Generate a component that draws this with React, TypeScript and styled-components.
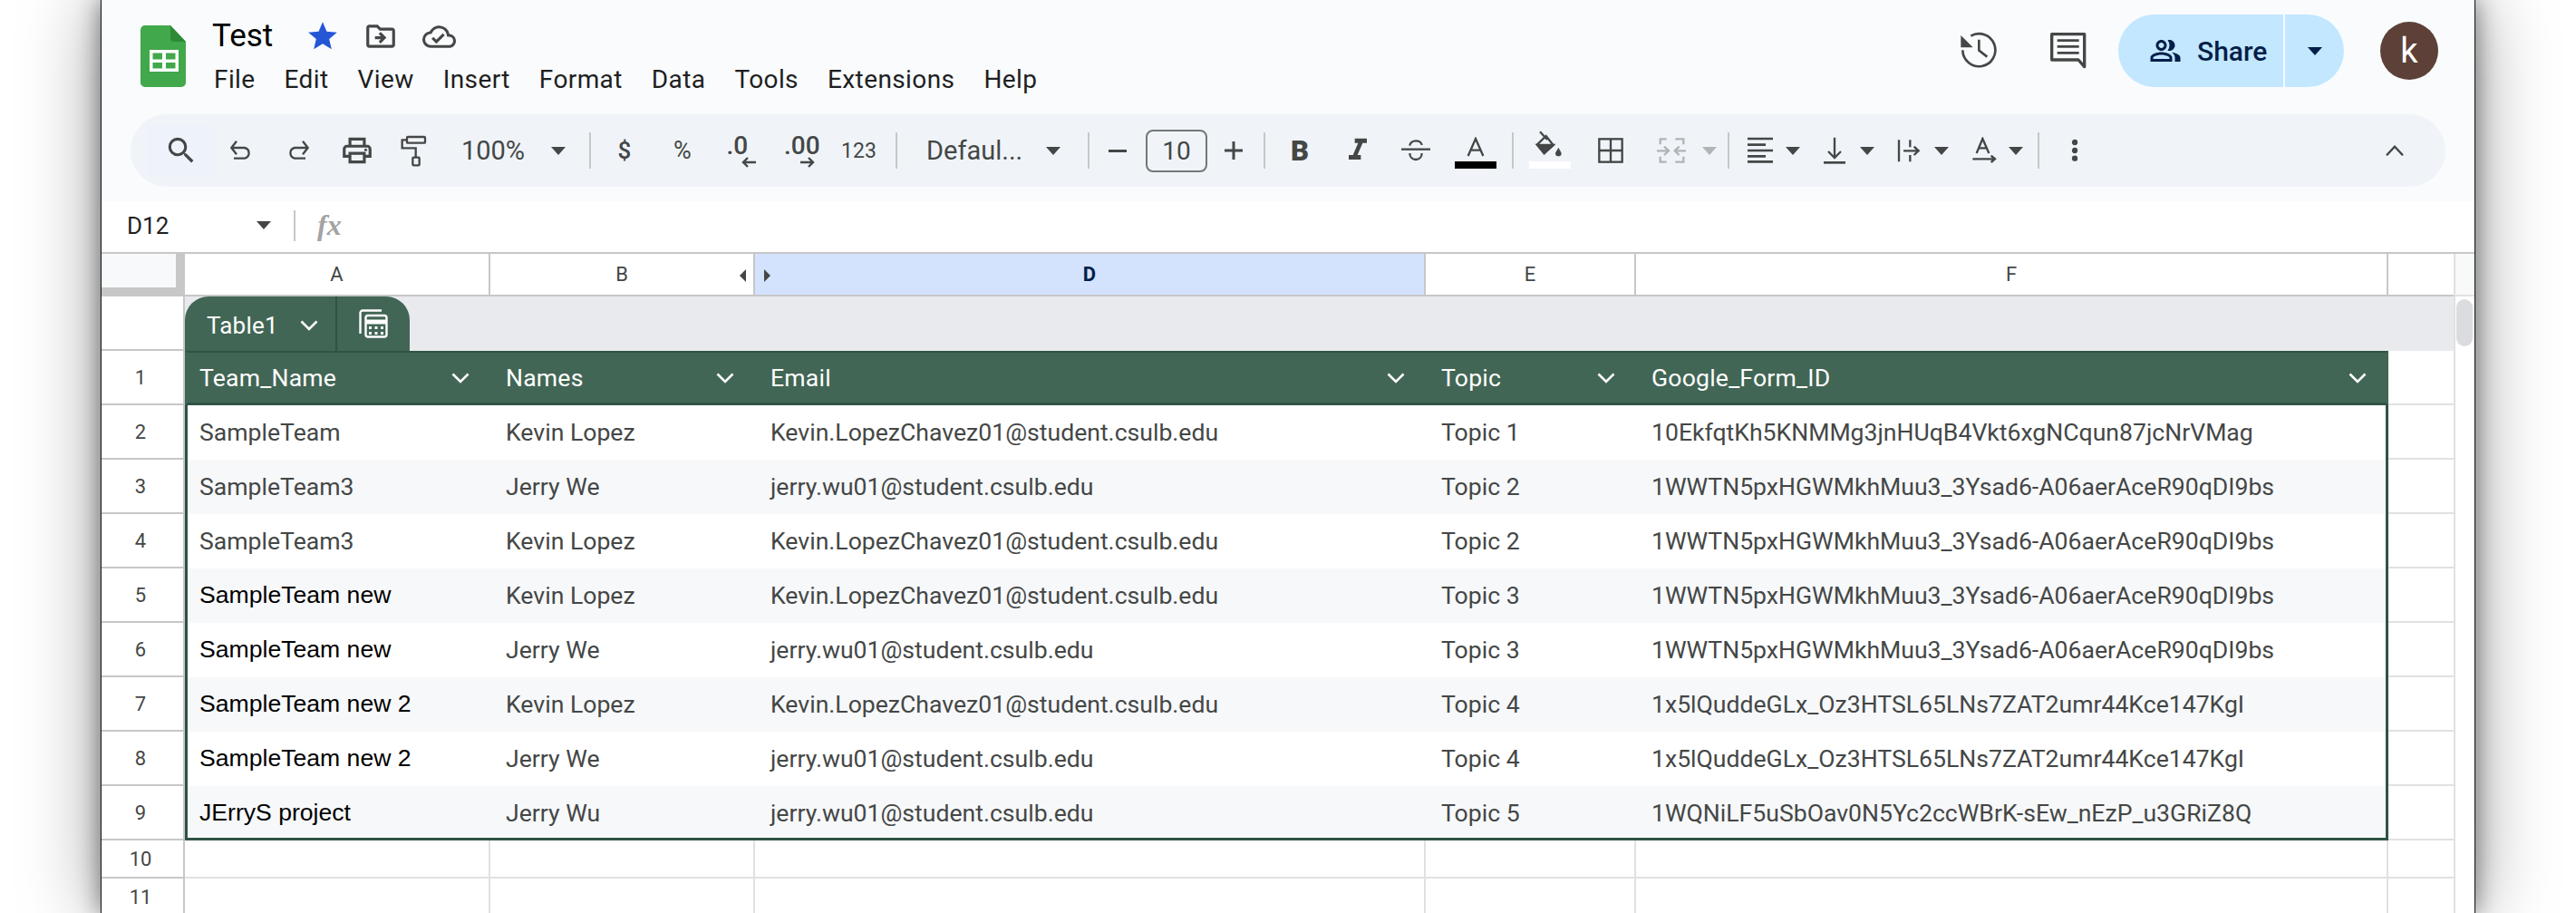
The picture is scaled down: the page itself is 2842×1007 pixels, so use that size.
import React from 'react';
import styled, { createGlobalStyle } from 'styled-components';
import {
  MdOutlinePrint,
  MdFormatItalic,
  MdStar,
  MdOutlineDriveFileMove,
  MdOutlineCloudDone,
  MdOutlinePeopleAlt,
  MdSearch,
} from 'react-icons/md';

const INK = '#444746';
const GREEN = '#426655';
const GREEN_DARK = '#2f5344';

const GlobalStyle = createGlobalStyle`
  html, body {
    margin: 0;
    height: 100%;
    background: #fff;
    overflow: hidden;
    font-family: Roboto, "Liberation Sans", sans-serif;
  }
`;

const Page = styled.div`
  width: 2842px;
  height: 1007px;
  padding-left: 111px;
  box-sizing: border-box;
  overflow: hidden;
`;

const Window = styled.div`
  width: 2620px;
  height: 1007px;
  box-sizing: border-box;
  border-left: 1px solid #111;
  border-right: 1px solid #111;
  background: #fff;
  box-shadow: 0 0 24px rgba(0, 0, 0, 0.45), 0 0 80px rgba(0, 0, 0, 0.4);
  display: flex;
  flex-direction: column;
  overflow: hidden;
`;

const Chrome = styled.div`
  height: 222px;
  flex: none;
  background: #f9fbfd;
`;

const TitleBar = styled.div`
  height: 126px;
  display: flex;
  padding: 0 40px 0 43px;
  box-sizing: border-box;
`;

const Logo = styled.svg`
  width: 50px;
  height: 68px;
  margin-top: 28px;
  flex: none;
`;

const TitleBlock = styled.div`
  margin-left: 29px;
  display: flex;
  flex-direction: column;
`;

const TitleRow = styled.div`
  height: 48px;
  margin-top: 16px;
  display: flex;
  align-items: center;
`;

const DocName = styled.div`
  font-size: 35px;
  color: #000;
  width: 103px;
  line-height: 48px;
`;

const TitleIcon = styled.div<{ $w: number }>`
  width: ${p => p.$w}px;
  display: flex;
  justify-content: center;
  color: ${INK};
`;

const MenuRow = styled.div`
  display: flex;
  gap: 32px;
  margin: 3px 0 0 2px;
  height: 40px;
  align-items: center;
`;

const MenuItem = styled.div`
  font-size: 28px;
  color: #1f1f1f;
  letter-spacing: 0.4px;
`;

const RightGroup = styled.div`
  margin-left: auto;
  height: 112px;
  display: flex;
  align-items: center;
`;

const ActionIcon = styled.div<{ $mr: number }>`
  width: 46px;
  display: flex;
  justify-content: center;
  margin-right: ${p => p.$mr}px;
`;

const ShareButton = styled.div`
  height: 80px;
  width: 249px;
  border-radius: 40px;
  background: #c2e7ff;
  display: flex;
  color: #041e49;
`;

const ShareMain = styled.div`
  width: 182px;
  display: flex;
  align-items: center;
  gap: 17px;
  padding-left: 34px;
  box-sizing: border-box;
  font-size: 30px;
  font-weight: 500;
`;

const ShareDrop = styled.div`
  flex: 1;
  border-left: 2px solid #f4faff;
  display: flex;
  align-items: center;
  justify-content: center;
`;

const Avatar = styled.div`
  width: 64px;
  height: 64px;
  margin-left: 40px;
  border-radius: 50%;
  background: #5d4037;
  color: #fff;
  font-size: 38px;
  display: flex;
  align-items: center;
  justify-content: center;
`;

const Toolbar = styled.div`
  margin: 0 32px 0 32px;
  height: 80px;
  border-radius: 40px;
  background: #f0f4f9;
  display: flex;
  align-items: center;
  padding: 0 46px 0 18px;
  box-sizing: border-box;
  color: ${INK};
`;

const SearchBox = styled.div`
  width: 75px;
  height: 56px;
  background: #eef3fb;
  display: flex;
  align-items: center;
  justify-content: center;
  flex: none;
`;

const Slot = styled.div<{ $w: number; $ml?: number }>`
  width: ${p => p.$w}px;
  margin-left: ${p => p.$ml ?? 0}px;
  flex: none;
  display: flex;
  align-items: center;
  justify-content: center;
`;

const PushedSlot = styled(Slot)`
  margin-left: auto;
`;

const ToolText = styled.span<{ $size?: number; $weight?: number }>`
  font-size: ${p => p.$size ?? 29}px;
  font-weight: ${p => p.$weight ?? 400};
  color: ${INK};
  white-space: nowrap;
`;

const FontName = styled(Slot)`
  justify-content: flex-start;
  padding-left: 11px;
  box-sizing: border-box;
`;

const Separator = styled.div`
  width: 2px;
  height: 40px;
  background: #c7c7c7;
`;

const SizeBox = styled.div`
  width: 68px;
  height: 47px;
  box-sizing: border-box;
  border: 2px solid #747775;
  border-radius: 8px;
  display: flex;
  align-items: center;
  justify-content: center;
  font-size: 28px;
  color: ${INK};
`;

const DecimalStack = styled.div<{ $w: number }>`
  width: ${p => p.$w}px;
  display: flex;
  flex-direction: column;
  align-items: flex-end;
  font-size: 28px;
  font-weight: 500;
  line-height: 25px;
  color: ${INK};
`;

const DecimalDigits = styled.span`
  align-self: flex-start;
`;

const ColorStack = styled.div`
  height: 40px;
  width: 46px;
  display: flex;
  flex-direction: column;
  align-items: center;
  justify-content: flex-end;
  gap: 5px;
`;

const Swatch = styled.div<{ $color: string }>`
  width: 46px;
  height: 8px;
  flex: none;
  background: ${p => p.$color};
`;

const FormulaBar = styled.div`
  height: 56px;
  flex: none;
  display: flex;
  align-items: center;
  background: #fff;
  padding: 0 0 3px 28px;
  box-sizing: border-box;
`;

const NameBox = styled.div`
  width: 143px;
  font-size: 26px;
  color: #1f1f1f;
`;

const FormulaDivider = styled.div`
  width: 2px;
  height: 34px;
  background: #c7c7c7;
  margin-left: 25px;
`;

const FxLabel = styled.div`
  margin-left: 24px;
  font-family: "Liberation Serif", serif;
  font-style: italic;
  font-weight: 700;
  font-size: 32px;
  color: #a3a3a3;
`;

const ColumnHeaders = styled.div`
  height: 49px;
  flex: none;
  display: flex;
  box-sizing: border-box;
  border-top: 2px solid #c7c7c7;
`;

const Corner = styled.div`
  width: 92px;
  box-sizing: border-box;
  background: #f8f9fa;
  border-right: 10px solid #c7c7c7;
  border-bottom: 10px solid #c7c7c7;
`;

const ColHead = styled.div<{ $w: number; $active?: boolean }>`
  width: ${p => p.$w}px;
  box-sizing: border-box;
  position: relative;
  border-right: 2px solid #c7c7c7;
  border-bottom: 2px solid #c7c7c7;
  background: ${p => (p.$active ? '#d3e3fd' : '#fff')};
  color: ${p => (p.$active ? '#041e49' : INK)};
  font-weight: ${p => (p.$active ? 700 : 400)};
  font-size: 22px;
  display: flex;
  align-items: center;
  justify-content: center;
`;

const HiddenMark = styled.div<{ $side: 'left' | 'right' }>`
  position: absolute;
  top: 17px;
  ${p => (p.$side === 'left' ? 'right: 8px;' : 'left: 10px;')}
  width: 0;
  height: 0;
  border-top: 7px solid transparent;
  border-bottom: 7px solid transparent;
  ${p => (p.$side === 'left' ? `border-right: 7px solid ${INK};` : `border-left: 7px solid ${INK};`)}
`;

const ColBlank = styled.div`
  width: 72px;
  box-sizing: border-box;
  border-bottom: 2px solid #c7c7c7;
`;

const GutterHead = styled.div`
  flex: 1;
  background: #f8f9fa;
  border-left: 2px solid #e1e1e1;
  border-bottom: 2px solid #e1e1e1;
  box-sizing: border-box;
`;

const SheetBody = styled.div`
  flex: 1;
  display: flex;
  min-height: 0;
`;

const Rows = styled.div`
  width: 2595px;
  flex: none;
`;

const Gutter = styled.div`
  flex: 1;
  border-left: 2px solid #e1e1e1;
  box-sizing: border-box;
  padding: 3px 0 0 1px;
`;

const Thumb = styled.div`
  width: 18px;
  height: 52px;
  border-radius: 9px;
  background: #dadce0;
`;

const Row = styled.div<{ $h?: number }>`
  display: flex;
  height: ${p => p.$h ?? 60}px;
`;

const RowNum = styled.div`
  width: 92px;
  flex: none;
  box-sizing: border-box;
  border-bottom: 2px solid #c7c7c7;
  border-right: 2px solid #c7c7c7;
  display: flex;
  align-items: center;
  justify-content: center;
  padding-right: 4px;
  font-size: 22px;
  color: ${INK};
`;

const Strip = styled.div`
  flex: 1;
  background: #e8eaed;
  display: flex;
`;

const Tab = styled.div`
  width: 248px;
  height: 60px;
  background: ${GREEN};
  border-radius: 26px 26px 0 0;
  display: flex;
  color: #fff;
`;

const TabName = styled.div`
  width: 168px;
  box-sizing: border-box;
  padding: 3px 0 0 24px;
  display: flex;
  align-items: center;
  gap: 24px;
  font-size: 26px;
  letter-spacing: 0.2px;
  border-right: 2px solid ${GREEN_DARK};
`;

const TabAction = styled.div`
  flex: 1;
  display: flex;
  align-items: center;
  justify-content: center;
`;

const TableRow = styled.div<{ $alt?: boolean; $last?: boolean }>`
  width: 2431px;
  flex: none;
  box-sizing: border-box;
  display: grid;
  grid-template-columns: 334px 292px 740px 232px 827px;
  background: ${p => (p.$alt ? '#f7f8fa' : '#fff')};
  border-left: 3px solid ${GREEN_DARK};
  border-right: 3px solid ${GREEN_DARK};
  ${p => p.$last && `box-shadow: inset 0 -3px 0 ${GREEN_DARK};`}
`;

const TableHeadRow = styled(TableRow)`
  background: ${GREEN};
  border-top: 2px solid ${GREEN_DARK};
  border-bottom: 3px solid ${GREEN_DARK};
  border-left-color: ${GREEN};
  border-right-color: ${GREEN};
`;

const HeadCell = styled.div`
  display: flex;
  align-items: center;
  justify-content: space-between;
  padding: 0 23px 0 17px;
  color: #fff;
  font-size: 26.6px;
  letter-spacing: 0.2px;
  &:first-child {
    padding-left: 13px;
  }
  &:last-child {
    padding-right: 21px;
  }
`;

const Cell = styled.div<{ $arial?: boolean }>`
  display: flex;
  align-items: center;
  padding: 0 0 ${p => (p.$arial ? 1 : 2)}px 17px;
  font-size: 26.6px;
  white-space: nowrap;
  color: ${p => (p.$arial ? '#000' : INK)};
  font-family: ${p => (p.$arial ? '"Liberation Sans", Arial, sans-serif' : 'Roboto, sans-serif')};
  &:first-child {
    padding-left: 13px;
  }
`;

const BlankCell = styled.div`
  width: 72px;
  flex: none;
  box-sizing: border-box;
  border-bottom: 2px solid #e1e1e1;
`;

const GridCell = styled.div<{ $w: number }>`
  width: ${p => p.$w}px;
  flex: none;
  box-sizing: border-box;
  border-right: 2px solid #e1e1e1;
  border-bottom: 2px solid #e1e1e1;
`;

const Svg = styled.svg`
  display: block;
  flex: none;
`;

const Caret = ({ color = INK }: { color?: string }) => (
  <Svg width="16" height="9" viewBox="0 0 16 9">
    <path d="M0 0h16L8 9z" fill={color} />
  </Svg>
);

const Chevron = () => (
  <Svg width="20" height="12" viewBox="0 0 20 12">
    <path d="M1.5 1.5L10 10l8.5-8.5" fill="none" stroke="#fff" strokeWidth="2.6" />
  </Svg>
);

const Draw = ({ x, y, w, h, children }: { x: number; y: number; w: number; h: number; children: React.ReactNode }) => (
  <Svg width={w / 3} height={h / 3} viewBox={`${x} ${y} ${w} ${h}`} fill="none" stroke={INK} strokeWidth="7">
    {children}
  </Svg>
);

const UndoIcon = () => (
  <Draw x={354} y={105} w={108} h={90}>
    <path d="M393 119L376 141L393 163M376 141H420A18 18 0 0 1 420 176H384" />
  </Draw>
);

const RedoIcon = () => (
  <Draw x={544} y={105} w={108} h={90}>
    <path d="M613 119L630 141L613 163M630 141H586A18 18 0 0 0 586 176H622" />
  </Draw>
);

const PaintIcon = () => (
  <Draw x={924} y={88} w={108} h={114}>
    <rect x="957" y="100" width="60" height="20" rx="3" />
    <path d="M957 110H941V137H986V168" />
    <rect x="976" y="168" width="22" height="26" rx="3" />
  </Draw>
);

const StrikeIcon = () => (
  <Draw x={1332} y={104} w={108} h={78}>
    <path d="M1338 139H1434" />
    <path d="M1366 127C1368 106 1404 106 1406 125M1366 152C1366 180 1406 180 1406 152" />
  </Draw>
);

const TextColorIcon = () => (
  <Draw x={108} y={96} w={66} h={66}>
    <path d="M116 159L141 102L166 159M125 140H157" />
  </Draw>
);

const FillIcon = () => (
  <Draw x={337} y={74} w={106} h={88}>
    <path d="M358 78L382 104" />
    <path d="M378 92L349 120L372 148L402 122Z" />
    <path d="M349 122H402L372 150Z" fill={INK} />
    <path d="M419 130C424 140 429 146 429 149A10 10 0 0 1 409 149C409 146 414 140 419 130Z" fill={INK} stroke="none" />
  </Draw>
);

const BordersIcon = () => (
  <Draw x={537} y={90} w={108} h={108}>
    <rect x="553" y="106" width="76" height="76" />
    <path d="M591 106V182M553 144H629" />
  </Draw>
);

const MergeIcon = () => (
  <Draw x={738} y={90} w={108} h={108}>
    <g stroke="#b1b4b6">
      <path d="M776 106H755V124M755 164V182H776M805 106H832V124M832 164V182H805" />
      <path d="M744 145H782M768 131L783 145L768 159M840 145H803M818 131L803 145L818 159" />
    </g>
  </Draw>
);

const AlignIcon = () => (
  <Draw x={1032} y={90} w={108} h={108}>
    <path d="M1044 105H1128M1044 125H1104M1044 144H1128M1044 163H1104M1044 181H1128" strokeWidth="8" />
  </Draw>
);

const VAlignIcon = () => (
  <Draw x={1296} y={96} w={72} h={90}>
    <path d="M1332 98V164M1311 144L1332 165L1353 144" />
    <path d="M1296 181H1368" strokeWidth="8" />
  </Draw>
);

const WrapIcon = () => (
  <Draw x={39} y={434} w={78} h={80}>
    <path d="M45 438V510M82 438V462M82 488V510" />
    <path d="M60 474H108M95 460L110 474L95 488" />
  </Draw>
);

const RotateIcon = () => (
  <Draw x={284} y={430} w={84} h={88}>
    <path d="M301 484L321 436L342 484M308 467H335" />
    <path d="M288 503H358M349 492L362 503L349 514" />
  </Draw>
);

const MoreIcon = () => (
  <Draw x={612} y={432} w={30} h={84}>
    <g fill={INK} stroke="none">
      <circle cx="627" cy="447" r="9.5" />
      <circle cx="627" cy="474" r="9.5" />
      <circle cx="627" cy="500" r="9.5" />
    </g>
  </Draw>
);

const CollapseIcon = () => (
  <Draw x={396} y={456} w={60} h={36}>
    <path d="M399 490L426 461L453 490" />
  </Draw>
);

const HistoryIcon = () => (
  <Draw x={246} y={76} w={126} h={124}>
    <path d="M283 90A54 54 0 1 1 256 137" strokeWidth="8" />
    <path d="M250 88V128H290Z" fill={INK} stroke="none" />
    <path d="M310 102V138L337 159" strokeWidth="8" />
  </Draw>
);

const CommentIcon = () => (
  <Draw x={544} y={78} w={124} h={124}>
    <path d="M552 86H660V194L640 171H552Z" strokeWidth="10" strokeLinejoin="round" />
    <path d="M570 107H642M570 127H642M570 148H642" strokeWidth="8" />
  </Draw>
);

const SmallArrow = ({ dir }: { dir: 'left' | 'right' }) => (
  <Svg width="16" height="12" viewBox="0 0 16 12" fill="none" stroke={INK} strokeWidth="2.4">
    {dir === 'left' ? <path d="M16 6H2M7 1L2 6l5 5" /> : <path d="M0 6h14M9 1l5 5-5 5" />}
  </Svg>
);

const CalcIcon = () => (
  <Svg width="32" height="32" viewBox="0 0 32 32" fill="none" stroke="#fff" strokeWidth="2.4">
    <path d="M1.5 27V4A2.5 2.5 0 0 1 4 1.5H25" />
    <rect x="7.5" y="7" width="23" height="23.5" rx="2.5" />
    <path d="M8 14h22" strokeWidth="5" />
    <g fill="#fff" stroke="none">
      <rect x="11" y="19" width="3" height="3" />
      <rect x="17.5" y="19" width="3" height="3" />
      <rect x="24" y="19" width="3" height="3" />
      <rect x="11" y="25" width="3" height="3" />
      <rect x="17.5" y="25" width="3" height="3" />
      <rect x="24" y="25" width="3" height="3" />
    </g>
  </Svg>
);

const MENU = ['File', 'Edit', 'View', 'Insert', 'Format', 'Data', 'Tools', 'Extensions', 'Help'];

const COLUMNS = [
  { key: 'A', label: 'Team_Name', w: 337 },
  { key: 'B', label: 'Names', w: 292 },
  { key: 'D', label: 'Email', w: 740 },
  { key: 'E', label: 'Topic', w: 232 },
  { key: 'F', label: 'Google_Form_ID', w: 830 },
];

const KEVIN = 'Kevin.LopezChavez01@student.csulb.edu';
const JERRY = 'jerry.wu01@student.csulb.edu';
const FORM_A = '1WWTN5pxHGWMkhMuu3_3Ysad6-A06aerAceR90qDI9bs';
const FORM_B = '1x5lQuddeGLx_Oz3HTSL65LNs7ZAT2umr44Kce147KgI';

const DATA: { cells: string[]; arial?: boolean }[] = [
  { cells: ['SampleTeam', 'Kevin Lopez', KEVIN, 'Topic 1', '10EkfqtKh5KNMMg3jnHUqB4Vkt6xgNCqun87jcNrVMag'] },
  { cells: ['SampleTeam3', 'Jerry We', JERRY, 'Topic 2', FORM_A] },
  { cells: ['SampleTeam3', 'Kevin Lopez', KEVIN, 'Topic 2', FORM_A] },
  { cells: ['SampleTeam new', 'Kevin Lopez', KEVIN, 'Topic 3', FORM_A], arial: true },
  { cells: ['SampleTeam new', 'Jerry We', JERRY, 'Topic 3', FORM_A], arial: true },
  { cells: ['SampleTeam new 2', 'Kevin Lopez', KEVIN, 'Topic 4', FORM_B], arial: true },
  { cells: ['SampleTeam new 2', 'Jerry We', JERRY, 'Topic 4', FORM_B], arial: true },
  { cells: ['JErryS project', 'Jerry Wu', JERRY, 'Topic 5', '1WQNiLF5uSbOav0N5Yc2ccWBrK-sEw_nEzP_u3GRiZ8Q'], arial: true },
];

const App: React.FC = () => {
  return (
    <Page>
      <GlobalStyle />
      <Window>
        <Chrome>
          <TitleBar>
            <Logo viewBox="0 0 50 68">
              <path d="M5 0H33L50 18V63a5 5 0 0 1-5 5H5a5 5 0 0 1-5-5V5a5 5 0 0 1 5-5z" fill="#41a84b" />
              <path d="M33 0L50 18H37a4 4 0 0 1-4-4z" fill="#2f8a38" />
              <path d="M10 27H42V51H10z" fill="#fff" />
              <path d="M13.5 30.5H24V37.5H13.5zM28 30.5H38.5V37.5H28zM13.5 41H24V47.5H13.5zM28 41H38.5V47.5H28z" fill="#41a84b" />
            </Logo>
            <TitleBlock>
              <TitleRow>
                <DocName>Test</DocName>
                <TitleIcon $w={38}>
                  <MdStar size={38} color="#2456d6" />
                </TitleIcon>
                <TitleIcon $w={90}>
                  <MdOutlineDriveFileMove size={38} />
                </TitleIcon>
                <TitleIcon $w={38}>
                  <MdOutlineCloudDone size={37} />
                </TitleIcon>
              </TitleRow>
              <MenuRow>
                {MENU.map(item => (
                  <MenuItem key={item}>{item}</MenuItem>
                ))}
              </MenuRow>
            </TitleBlock>
            <RightGroup>
              <ActionIcon $mr={53}>
                <HistoryIcon />
              </ActionIcon>
              <ActionIcon $mr={32}>
                <CommentIcon />
              </ActionIcon>
              <ShareButton>
                <ShareMain>
                  <MdOutlinePeopleAlt size={36} />
                  Share
                </ShareMain>
                <ShareDrop>
                  <Caret color="#041e49" />
                </ShareDrop>
              </ShareButton>
              <Avatar>k</Avatar>
            </RightGroup>
          </TitleBar>
          <Toolbar>
            <SearchBox>
              <MdSearch size={38} />
            </SearchBox>
            <Slot $w={58}><UndoIcon /></Slot>
            <Slot $w={68}><RedoIcon /></Slot>
            <Slot $w={62}><MdOutlinePrint size={38} /></Slot>
            <Slot $w={62}><PaintIcon /></Slot>
            <Slot $w={114}><ToolText>100%</ToolText></Slot>
            <Slot $w={30}><Caret /></Slot>
            <Slot $w={40}><Separator /></Slot>
            <Slot $w={36}><ToolText $size={26} $weight={500}>$</ToolText></Slot>
            <Slot $w={92}><ToolText $size={27}>%</ToolText></Slot>
            <Slot $w={37}>
              <DecimalStack $w={32}>
                <DecimalDigits>.0</DecimalDigits>
                <SmallArrow dir="left" />
              </DecimalStack>
            </Slot>
            <Slot $w={92}>
              <DecimalStack $w={34}>
                <DecimalDigits>.00</DecimalDigits>
                <SmallArrow dir="right" />
              </DecimalStack>
            </Slot>
            <Slot $w={39}><ToolText $size={23}>123</ToolText></Slot>
            <Slot $w={44}><Separator /></Slot>
            <FontName $w={136}><ToolText>Defaul...</ToolText></FontName>
            <Slot $w={30}><Caret /></Slot>
            <Slot $w={48}><Separator /></Slot>
            <Slot $w={16}>
              <Svg width="20" height="3" viewBox="0 0 20 3"><path d="M0 0h20v3H0z" fill={INK} /></Svg>
            </Slot>
            <Slot $w={114}><SizeBox>10</SizeBox></Slot>
            <Slot $w={12}>
              <Svg width="20" height="20" viewBox="0 0 20 20"><path d="M8.5 0h3v8.5H20v3h-8.5V20h-3v-8.5H0v-3h8.5z" fill={INK} /></Svg>
            </Slot>
            <Slot $w={56}><Separator /></Slot>
            <Slot $w={22}><ToolText $size={31} $weight={900}>B</ToolText></Slot>
            <Slot $w={106}><MdFormatItalic size={40} /></Slot>
            <Slot $w={22}><StrikeIcon /></Slot>
            <Slot $w={46} $ml={32}>
              <ColorStack>
                <TextColorIcon />
                <Swatch $color="#000" />
              </ColorStack>
            </Slot>
            <Slot $w={36}><Separator /></Slot>
            <Slot $w={46}>
              <ColorStack>
                <FillIcon />
                <Swatch $color="#fff" />
              </ColorStack>
            </Slot>
            <Slot $w={88}><BordersIcon /></Slot>
            <Slot $w={46}><MergeIcon /></Slot>
            <Slot $w={38}><Caret color="#b1b4b6" /></Slot>
            <Slot $w={4}><Separator /></Slot>
            <Slot $w={66}><AlignIcon /></Slot>
            <Slot $w={6}><Caret /></Slot>
            <Slot $w={24} $ml={31}><VAlignIcon /></Slot>
            <Slot $w={16} $ml={16}><Caret /></Slot>
            <Slot $w={26} $ml={25}><WrapIcon /></Slot>
            <Slot $w={16} $ml={15}><Caret /></Slot>
            <Slot $w={28} $ml={25}><RotateIcon /></Slot>
            <Slot $w={16} $ml={13}><Caret /></Slot>
            <Slot $w={2} $ml={16}><Separator /></Slot>
            <Slot $w={18} $ml={30}><MoreIcon /></Slot>
            <PushedSlot $w={20}><CollapseIcon /></PushedSlot>
          </Toolbar>
        </Chrome>

        <FormulaBar>
          <NameBox>D12</NameBox>
          <Caret />
          <FormulaDivider />
          <FxLabel>fx</FxLabel>
        </FormulaBar>

        <ColumnHeaders>
          <Corner />
          {COLUMNS.map(col => (
            <ColHead key={col.key} $w={col.w} $active={col.key === 'D'}>
              {col.key}
              {col.key === 'B' && <HiddenMark $side="left" />}
              {col.key === 'D' && <HiddenMark $side="right" />}
            </ColHead>
          ))}
          <ColBlank />
          <GutterHead />
        </ColumnHeaders>

        <SheetBody>
          <Rows>
            <Row>
              <RowNum />
              <Strip>
                <Tab>
                  <TabName>
                    Table1
                    <Chevron />
                  </TabName>
                  <TabAction>
                    <CalcIcon />
                  </TabAction>
                </Tab>
              </Strip>
            </Row>
            <Row>
              <RowNum>1</RowNum>
              <TableHeadRow>
                {COLUMNS.map(col => (
                  <HeadCell key={col.key}>
                    {col.label}
                    <Chevron />
                  </HeadCell>
                ))}
              </TableHeadRow>
              <BlankCell />
            </Row>
            {DATA.map((row, i) => (
              <Row key={i}>
                <RowNum>{i + 2}</RowNum>
                <TableRow $alt={i % 2 === 1} $last={i === DATA.length - 1}>
                  {row.cells.map((text, c) => (
                    <Cell key={c} $arial={c === 0 && row.arial}>
                      {text}
                    </Cell>
                  ))}
                </TableRow>
                <BlankCell />
              </Row>
            ))}
            {[10, 11].map(n => (
              <Row key={n} $h={42}>
                <RowNum>{n}</RowNum>
                {COLUMNS.map(col => (
                  <GridCell key={col.key} $w={col.w} />
                ))}
                <BlankCell />
              </Row>
            ))}
          </Rows>
          <Gutter>
            <Thumb />
          </Gutter>
        </SheetBody>
      </Window>
    </Page>
  );
};

export default App;
